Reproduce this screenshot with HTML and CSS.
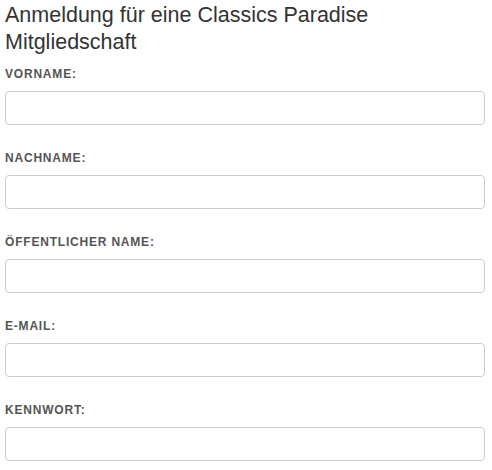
FILE: index.html
```html
<!DOCTYPE html>
<html lang="de">
<head>
<meta charset="utf-8">
<link rel="stylesheet" href="styles.css">
</head>
<body>
<form class="signup">
  <h2 class="title">Anmeldung für eine Classics Paradise Mitgliedschaft</h2>
  <div class="field">
    <label class="label" for="vorname">Vorname:</label>
    <input class="input" id="vorname" type="text">
  </div>
  <div class="field">
    <label class="label" for="nachname">Nachname:</label>
    <input class="input" id="nachname" type="text">
  </div>
  <div class="field">
    <label class="label" for="pubname">Öffentlicher Name:</label>
    <input class="input" id="pubname" type="text">
  </div>
  <div class="field">
    <label class="label" for="email">E-Mail:</label>
    <input class="input" id="email" type="email">
  </div>
  <div class="field">
    <label class="label" for="pw">Kennwort:</label>
    <input class="input" id="pw" type="password">
  </div>
</form>
</body>
</html>
```
FILE: styles.css
```css
html, body {
  margin: 0;
  padding: 0;
  background: #fff;
}
body {
  font-family: "Liberation Sans", Arial, sans-serif;
  color: #333;
}
.signup {
  padding: 0 5px;
  width: 480px;
}
.title {
  margin: 2px 0 11px 0;
  font-size: 21.5px;
  font-weight: normal;
  line-height: 26.5px;
  color: #333;
}
.field {
  display: flex;
  flex-direction: column;
  margin-bottom: 25px;
}
.label {
  display: block;
  font-size: 12px;
  font-weight: bold;
  line-height: 17px;
  letter-spacing: 0.8px;
  text-transform: uppercase;
  color: #555;
  margin-bottom: 8px;
}
.input {
  box-sizing: border-box;
  width: 480px;
  height: 34px;
  margin: 0;
  border: 1px solid #ccc;
  border-radius: 4px;
  background: #fff;
  padding: 6px 12px;
  font-family: inherit;
  font-size: 14px;
}
```
